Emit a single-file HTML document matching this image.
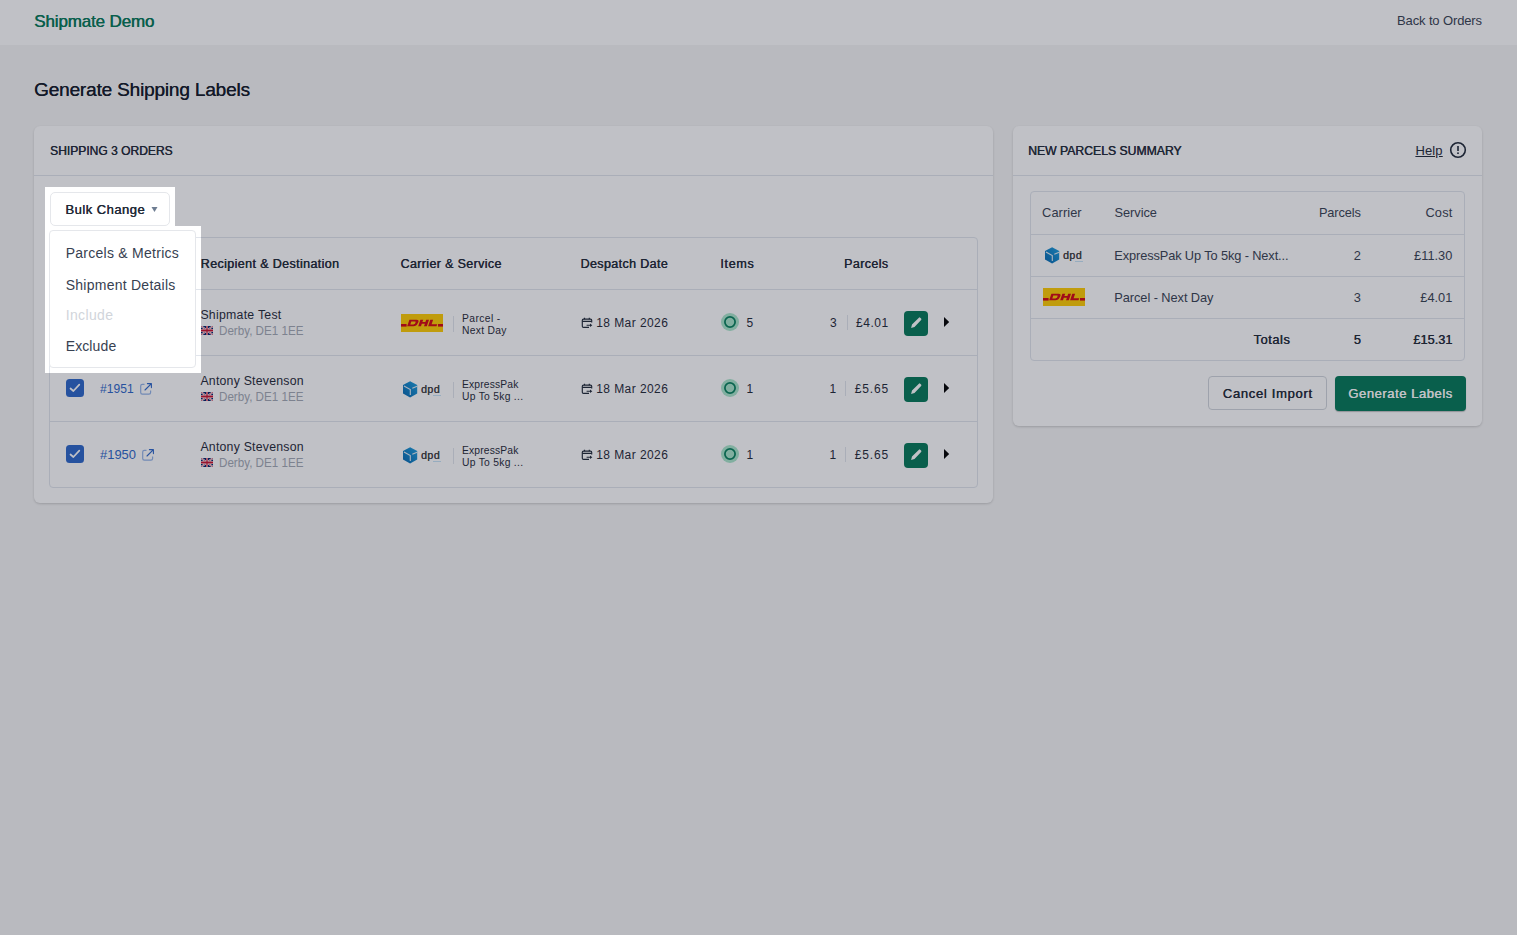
<!DOCTYPE html>
<html><head><meta charset="utf-8">
<style>
*{box-sizing:border-box;margin:0;padding:0}
html,body{width:1517px;height:935px;overflow:hidden}
body{background:#f6f6f6;font-family:"Liberation Sans",sans-serif;color:#1f2937;position:relative}
.a{position:absolute}
.t{position:absolute;white-space:nowrap;line-height:1}
.b{font-weight:bold}
.panel{position:absolute;background:#fff;border-radius:6px;box-shadow:0 1px 3px rgba(0,0,0,.12),0 1px 2px rgba(0,0,0,.06)}
.hl{position:absolute;background:#e1e5ec;height:1px}
.vl{position:absolute;background:#e1e5ec;width:1px}
.ov{position:absolute;background:rgba(24,28,46,.275)}
</style></head><body>

<div class="a" style="left:0;top:0;width:1517px;height:45px;background:#fff"></div>
<div class="t" id="logo" style="left:34.1px;top:12.5px;font-size:17px;color:#047857;text-shadow:0.4px 0 0 currentColor;letter-spacing:-0.141px;">Shipmate Demo</div>
<div class="t" id="back" style="right:35.1px;top:13.5px;font-size:13px;color:#374151;letter-spacing:-0.131px;">Back to Orders</div>
<div class="t" id="title" style="left:34.0px;top:80.0px;font-size:19px;color:#111827;text-shadow:0.3px 0 0 currentColor;letter-spacing:-0.166px;">Generate Shipping Labels</div>
<div class="panel" style="left:34px;top:126px;width:959px;height:377px"></div>
<div class="hl" style="left:34px;top:175px;width:959px"></div>
<div class="t" id="ship" style="left:49.9px;top:144.0px;font-size:13px;color:#1f2937;text-shadow:0.4px 0 0 currentColor;transform:scaleX(0.9266);transform-origin:0 0;">SHIPPING 3 ORDERS</div>
<div class="a" style="left:49px;top:237px;width:929px;height:251px;border:1px solid #e1e5ec;border-radius:4px"></div>
<div class="hl" style="left:49px;top:289px;width:929px"></div>
<div class="hl" style="left:49px;top:355px;width:929px"></div>
<div class="hl" style="left:49px;top:421px;width:929px"></div>
<div class="t" id="h1" style="left:200.6px;top:257.5px;font-size:12.5px;color:#1f2937;text-shadow:0.4px 0 0 currentColor;letter-spacing:0.380px;">Recipient &amp; Destination</div>
<div class="t" id="h2" style="left:400.4px;top:257.5px;font-size:12.5px;color:#1f2937;text-shadow:0.4px 0 0 currentColor;letter-spacing:0.352px;">Carrier &amp; Service</div>
<div class="t" id="h3" style="left:580.4px;top:257.5px;font-size:12.5px;color:#1f2937;text-shadow:0.4px 0 0 currentColor;letter-spacing:0.376px;">Despatch Date</div>
<div class="t" id="h4" style="left:720.2px;top:257.5px;font-size:12.5px;color:#1f2937;text-shadow:0.4px 0 0 currentColor;letter-spacing:0.709px;">Items</div>
<div class="t" id="h5" style="right:628.7px;top:257.5px;font-size:12.5px;color:#1f2937;text-shadow:0.4px 0 0 currentColor;letter-spacing:0.385px;">Parcels</div>
<svg class="a" style="left:66px;top:313px" width="18" height="18" viewBox="0 0 18 18"><rect width="18" height="18" rx="3.5" fill="#2c66c9"/><path d="M4.5 9.5 L7.4 12 L13.3 5.7" stroke="#fff" stroke-width="1.7" fill="none" stroke-linecap="round" stroke-linejoin="round"/></svg>
<div class="t" id="num0" style="left:100.3px;top:316.5px;font-size:12.7px;color:#2c66c9;transform:scaleX(0.9523);transform-origin:0 0;">#1952</div>
<svg class="a" style="left:139px;top:316px" width="14" height="14" viewBox="0 0 14 14"><path d="M5.5 2.3 H3.3 A1.6 1.6 0 0 0 1.7 3.9 V10.6 A1.6 1.6 0 0 0 3.3 12.2 H10 A1.6 1.6 0 0 0 11.6 10.6 V8.4" stroke="#93b4e8" stroke-width="1.2" fill="none"/><path d="M6 8 L12.4 1.6 M8.4 1.6 H12.4 V5.6" stroke="#2c66c9" stroke-width="1.1" fill="none" stroke-linecap="round" stroke-linejoin="round"/></svg>
<div class="t" id="name0" style="left:200.4px;top:308.5px;font-size:12.3px;color:#1f2937;letter-spacing:0.266px;">Shipmate Test</div>
<svg class="a" style="left:201px;top:326px" width="12" height="9" viewBox="0 0 60 30" preserveAspectRatio="none"><rect width="60" height="30" fill="#012169"/><path d="M0,0 L60,30 M60,0 L0,30" stroke="#fff" stroke-width="7"/><path d="M0,0 L60,30 M60,0 L0,30" stroke="#C8102E" stroke-width="2.5"/><path d="M30,0 V30 M0,15 H60" stroke="#fff" stroke-width="10"/><path d="M30,0 V30 M0,15 H60" stroke="#C8102E" stroke-width="6"/></svg>
<div class="t" id="derby0" style="left:218.7px;top:324.5px;font-size:12.3px;color:#a3a9b4;transform:scaleX(0.9450);transform-origin:0 0;">Derby, DE1 1EE</div>
<svg class="a" style="left:401px;top:314px" width="42" height="18" viewBox="0 0 42 18"><rect width="42" height="18" fill="#FFCC00"/><rect x="0" y="10" width="5.6" height="2.6" fill="#D40511"/><rect x="37" y="10" width="5" height="2.6" fill="#D40511"/><g fill="#D40511"><path d="M8.4 5.8 H15.6 C17.6 5.8 18 6.8 17.2 8.4 L16.6 9.6 C15.7 11.4 14.6 12.2 12.4 12.2 H6.2 Z M10.3 7.6 L9.3 10.4 H12.3 C13.3 10.4 13.8 10 14.2 9.2 L14.5 8.6 C14.8 7.9 14.6 7.6 13.8 7.6 Z"/><path d="M19.4 5.8 H22.2 L21.4 8.1 H24.4 L25.2 5.8 H28 L25.8 12.2 H23 L23.9 9.8 H20.8 L20 12.2 H17.2 Z"/><path d="M29.3 5.8 H32.1 L30.6 10.3 H36.2 L35.5 12.2 H27.1 Z"/></g></svg>
<div class="vl" style="left:453px;top:316px;height:16px"></div>
<div class="t" id="s10" style="left:462.0px;top:313.5px;font-size:10.3px;color:#1f2937;letter-spacing:0.402px;">Parcel -</div>
<div class="t" id="s20" style="left:462.0px;top:325.5px;font-size:10.3px;color:#1f2937;letter-spacing:0.306px;">Next Day</div>
<svg class="a" style="left:581px;top:317px" width="12" height="12" viewBox="0 0 12 12"><path d="M10.7 5.6 V3.3 A1.2 1.2 0 0 0 9.5 2.1 H2.5 A1.2 1.2 0 0 0 1.3 3.3 V9.2 A1.2 1.2 0 0 0 2.5 10.4 H8" stroke="#1f2937" stroke-width="1.15" fill="none"/><path d="M1.3 4.4 H10.7 M3.5 0.8 V2.2 M8.3 0.8 V2.2 M5.6 8.2 H9.4" stroke="#1f2937" stroke-width="1.15" fill="none"/><path d="M9 6.5 L11.3 8.2 L9 9.9 Z" fill="#1f2937"/></svg>
<div class="t" id="date0" style="left:596.2px;top:316.5px;font-size:12px;color:#1f2937;letter-spacing:0.431px;">18 Mar 2026</div>
<svg class="a" style="left:721px;top:313px" width="18" height="18" viewBox="0 0 18 18"><circle cx="9" cy="9" r="9" fill="#a9e6cb"/><circle cx="9" cy="9" r="5.1" fill="none" stroke="#06805c" stroke-width="1.75"/></svg>
<div class="t" id="items0" style="left:746.4px;top:317.0px;font-size:12px;color:#1f2937;">5</div>
<div class="t" id="amt0" style="right:628.3px;top:317.0px;font-size:12px;color:#1f2937;letter-spacing:0.542px;">£4.01</div>
<div class="vl" style="left:847px;top:315px;height:15px"></div>
<div class="t" id="cnt0" style="right:680.3px;top:317.0px;font-size:12px;color:#1f2937;">3</div>
<svg class="a" style="left:904px;top:311px" width="24" height="25" viewBox="0 0 24 25"><rect width="24" height="25" rx="4" fill="#047857"/><path d="M7.1 16.9 L8 13.4 L14.9 6.7 A0.9 0.9 0 0 1 16.2 6.7 L17.1 7.6 A0.9 0.9 0 0 1 17.1 8.9 L10.5 16.1 Z" fill="#fff"/></svg>
<svg class="a" style="left:944px;top:317px" width="6" height="10" viewBox="0 0 6 10"><path d="M0 0 L5.2 5 L0 10 Z" fill="#000"/></svg>
<svg class="a" style="left:66px;top:379px" width="18" height="18" viewBox="0 0 18 18"><rect width="18" height="18" rx="3.5" fill="#2c66c9"/><path d="M4.5 9.5 L7.4 12 L13.3 5.7" stroke="#fff" stroke-width="1.7" fill="none" stroke-linecap="round" stroke-linejoin="round"/></svg>
<div class="t" id="num1" style="left:100.3px;top:382.5px;font-size:12.7px;color:#2c66c9;transform:scaleX(0.9523);transform-origin:0 0;">#1951</div>
<svg class="a" style="left:139px;top:382px" width="14" height="14" viewBox="0 0 14 14"><path d="M5.5 2.3 H3.3 A1.6 1.6 0 0 0 1.7 3.9 V10.6 A1.6 1.6 0 0 0 3.3 12.2 H10 A1.6 1.6 0 0 0 11.6 10.6 V8.4" stroke="#93b4e8" stroke-width="1.2" fill="none"/><path d="M6 8 L12.4 1.6 M8.4 1.6 H12.4 V5.6" stroke="#2c66c9" stroke-width="1.1" fill="none" stroke-linecap="round" stroke-linejoin="round"/></svg>
<div class="t" id="name1" style="left:200.4px;top:374.5px;font-size:12.3px;color:#1f2937;letter-spacing:0.226px;">Antony Stevenson</div>
<svg class="a" style="left:201px;top:392px" width="12" height="9" viewBox="0 0 60 30" preserveAspectRatio="none"><rect width="60" height="30" fill="#012169"/><path d="M0,0 L60,30 M60,0 L0,30" stroke="#fff" stroke-width="7"/><path d="M0,0 L60,30 M60,0 L0,30" stroke="#C8102E" stroke-width="2.5"/><path d="M30,0 V30 M0,15 H60" stroke="#fff" stroke-width="10"/><path d="M30,0 V30 M0,15 H60" stroke="#C8102E" stroke-width="6"/></svg>
<div class="t" id="derby1" style="left:218.7px;top:390.5px;font-size:12.3px;color:#a3a9b4;transform:scaleX(0.9450);transform-origin:0 0;">Derby, DE1 1EE</div>
<svg class="a" style="left:403px;top:381px" width="15" height="17" viewBox="0 0 15 17"><defs><linearGradient id="g403381" x1="0" y1="1" x2="1" y2="0"><stop offset="0" stop-color="#0567b0"/><stop offset="1" stop-color="#1aa0e0"/></linearGradient></defs><path d="M7.1 0.2 L14.2 3.9 L14.2 12.6 L7.1 16.4 L0 12.6 L0 3.9 Z" fill="url(#g403381)"/><path d="M1 5 L7.3 8.6 L7.3 13.9" stroke="#e6eef3" stroke-width="1.1" fill="none"/><path d="M9.3 7.2 L14.1 5.3" stroke="#e6eef3" stroke-width="1.1" fill="none"/></svg><div class="t" style="left:421px;top:384px;font-size:10.6px;color:#414042;letter-spacing:0.45px;text-shadow:0.25px 0 0 #414042">dpd</div><div class="a" style="left:433px;top:394.5px;width:8px;height:1.4px;background:#6fb8e6;opacity:.4"></div>
<div class="vl" style="left:453px;top:382px;height:16px"></div>
<div class="t" id="s11" style="left:462.0px;top:379.5px;font-size:10.3px;color:#1f2937;letter-spacing:0.150px;">ExpressPak</div>
<div class="t" id="s21" style="left:462.0px;top:391.5px;font-size:10.3px;color:#1f2937;letter-spacing:0.281px;">Up To 5kg ...</div>
<svg class="a" style="left:581px;top:383px" width="12" height="12" viewBox="0 0 12 12"><path d="M10.7 5.6 V3.3 A1.2 1.2 0 0 0 9.5 2.1 H2.5 A1.2 1.2 0 0 0 1.3 3.3 V9.2 A1.2 1.2 0 0 0 2.5 10.4 H8" stroke="#1f2937" stroke-width="1.15" fill="none"/><path d="M1.3 4.4 H10.7 M3.5 0.8 V2.2 M8.3 0.8 V2.2 M5.6 8.2 H9.4" stroke="#1f2937" stroke-width="1.15" fill="none"/><path d="M9 6.5 L11.3 8.2 L9 9.9 Z" fill="#1f2937"/></svg>
<div class="t" id="date1" style="left:596.2px;top:382.5px;font-size:12px;color:#1f2937;letter-spacing:0.431px;">18 Mar 2026</div>
<svg class="a" style="left:721px;top:379px" width="18" height="18" viewBox="0 0 18 18"><circle cx="9" cy="9" r="9" fill="#a9e6cb"/><circle cx="9" cy="9" r="5.1" fill="none" stroke="#06805c" stroke-width="1.75"/></svg>
<div class="t" id="items1" style="left:746.4px;top:383.0px;font-size:12px;color:#1f2937;">1</div>
<div class="t" id="amt1" style="right:627.9px;top:383.0px;font-size:12px;color:#1f2937;letter-spacing:0.867px;">£5.65</div>
<div class="vl" style="left:845px;top:381px;height:15px"></div>
<div class="t" id="cnt1" style="right:680.9px;top:383.0px;font-size:12px;color:#1f2937;">1</div>
<svg class="a" style="left:904px;top:377px" width="24" height="25" viewBox="0 0 24 25"><rect width="24" height="25" rx="4" fill="#047857"/><path d="M7.1 16.9 L8 13.4 L14.9 6.7 A0.9 0.9 0 0 1 16.2 6.7 L17.1 7.6 A0.9 0.9 0 0 1 17.1 8.9 L10.5 16.1 Z" fill="#fff"/></svg>
<svg class="a" style="left:944px;top:383px" width="6" height="10" viewBox="0 0 6 10"><path d="M0 0 L5.2 5 L0 10 Z" fill="#000"/></svg>
<svg class="a" style="left:66px;top:445px" width="18" height="18" viewBox="0 0 18 18"><rect width="18" height="18" rx="3.5" fill="#2c66c9"/><path d="M4.5 9.5 L7.4 12 L13.3 5.7" stroke="#fff" stroke-width="1.7" fill="none" stroke-linecap="round" stroke-linejoin="round"/></svg>
<div class="t" id="num2" style="left:100.3px;top:448.5px;font-size:12.7px;color:#2c66c9;transform:scaleX(1.0204);transform-origin:0 0;">#1950</div>
<svg class="a" style="left:141px;top:448px" width="14" height="14" viewBox="0 0 14 14"><path d="M5.5 2.3 H3.3 A1.6 1.6 0 0 0 1.7 3.9 V10.6 A1.6 1.6 0 0 0 3.3 12.2 H10 A1.6 1.6 0 0 0 11.6 10.6 V8.4" stroke="#93b4e8" stroke-width="1.2" fill="none"/><path d="M6 8 L12.4 1.6 M8.4 1.6 H12.4 V5.6" stroke="#2c66c9" stroke-width="1.1" fill="none" stroke-linecap="round" stroke-linejoin="round"/></svg>
<div class="t" id="name2" style="left:200.4px;top:440.5px;font-size:12.3px;color:#1f2937;letter-spacing:0.226px;">Antony Stevenson</div>
<svg class="a" style="left:201px;top:458px" width="12" height="9" viewBox="0 0 60 30" preserveAspectRatio="none"><rect width="60" height="30" fill="#012169"/><path d="M0,0 L60,30 M60,0 L0,30" stroke="#fff" stroke-width="7"/><path d="M0,0 L60,30 M60,0 L0,30" stroke="#C8102E" stroke-width="2.5"/><path d="M30,0 V30 M0,15 H60" stroke="#fff" stroke-width="10"/><path d="M30,0 V30 M0,15 H60" stroke="#C8102E" stroke-width="6"/></svg>
<div class="t" id="derby2" style="left:218.7px;top:456.5px;font-size:12.3px;color:#a3a9b4;transform:scaleX(0.9450);transform-origin:0 0;">Derby, DE1 1EE</div>
<svg class="a" style="left:403px;top:447px" width="15" height="17" viewBox="0 0 15 17"><defs><linearGradient id="g403447" x1="0" y1="1" x2="1" y2="0"><stop offset="0" stop-color="#0567b0"/><stop offset="1" stop-color="#1aa0e0"/></linearGradient></defs><path d="M7.1 0.2 L14.2 3.9 L14.2 12.6 L7.1 16.4 L0 12.6 L0 3.9 Z" fill="url(#g403447)"/><path d="M1 5 L7.3 8.6 L7.3 13.9" stroke="#e6eef3" stroke-width="1.1" fill="none"/><path d="M9.3 7.2 L14.1 5.3" stroke="#e6eef3" stroke-width="1.1" fill="none"/></svg><div class="t" style="left:421px;top:450px;font-size:10.6px;color:#414042;letter-spacing:0.45px;text-shadow:0.25px 0 0 #414042">dpd</div><div class="a" style="left:433px;top:460.5px;width:8px;height:1.4px;background:#6fb8e6;opacity:.4"></div>
<div class="vl" style="left:453px;top:448px;height:16px"></div>
<div class="t" id="s12" style="left:462.0px;top:445.5px;font-size:10.3px;color:#1f2937;letter-spacing:0.150px;">ExpressPak</div>
<div class="t" id="s22" style="left:462.0px;top:457.5px;font-size:10.3px;color:#1f2937;letter-spacing:0.281px;">Up To 5kg ...</div>
<svg class="a" style="left:581px;top:449px" width="12" height="12" viewBox="0 0 12 12"><path d="M10.7 5.6 V3.3 A1.2 1.2 0 0 0 9.5 2.1 H2.5 A1.2 1.2 0 0 0 1.3 3.3 V9.2 A1.2 1.2 0 0 0 2.5 10.4 H8" stroke="#1f2937" stroke-width="1.15" fill="none"/><path d="M1.3 4.4 H10.7 M3.5 0.8 V2.2 M8.3 0.8 V2.2 M5.6 8.2 H9.4" stroke="#1f2937" stroke-width="1.15" fill="none"/><path d="M9 6.5 L11.3 8.2 L9 9.9 Z" fill="#1f2937"/></svg>
<div class="t" id="date2" style="left:596.2px;top:448.5px;font-size:12px;color:#1f2937;letter-spacing:0.431px;">18 Mar 2026</div>
<svg class="a" style="left:721px;top:445px" width="18" height="18" viewBox="0 0 18 18"><circle cx="9" cy="9" r="9" fill="#a9e6cb"/><circle cx="9" cy="9" r="5.1" fill="none" stroke="#06805c" stroke-width="1.75"/></svg>
<div class="t" id="items2" style="left:746.4px;top:449.0px;font-size:12px;color:#1f2937;">1</div>
<div class="t" id="amt2" style="right:627.9px;top:449.0px;font-size:12px;color:#1f2937;letter-spacing:0.867px;">£5.65</div>
<div class="vl" style="left:845px;top:447px;height:15px"></div>
<div class="t" id="cnt2" style="right:680.9px;top:449.0px;font-size:12px;color:#1f2937;">1</div>
<svg class="a" style="left:904px;top:443px" width="24" height="25" viewBox="0 0 24 25"><rect width="24" height="25" rx="4" fill="#047857"/><path d="M7.1 16.9 L8 13.4 L14.9 6.7 A0.9 0.9 0 0 1 16.2 6.7 L17.1 7.6 A0.9 0.9 0 0 1 17.1 8.9 L10.5 16.1 Z" fill="#fff"/></svg>
<svg class="a" style="left:944px;top:449px" width="6" height="10" viewBox="0 0 6 10"><path d="M0 0 L5.2 5 L0 10 Z" fill="#000"/></svg>
<div class="panel" style="left:1013px;top:126px;width:469px;height:300px"></div>
<div class="hl" style="left:1013px;top:175px;width:469px"></div>
<div class="t" id="nps" style="left:1028.1px;top:144.0px;font-size:13px;color:#1f2937;text-shadow:0.4px 0 0 currentColor;transform:scaleX(0.9388);transform-origin:0 0;">NEW PARCELS SUMMARY</div>
<div class="t" id="help" style="left:1415.4px;top:144.0px;font-size:13px;color:#1f2937;letter-spacing:0.150px;text-decoration:underline;">Help</div>
<svg class="a" style="left:1449px;top:141px" width="18" height="18" viewBox="0 0 18 18"><circle cx="9" cy="9" r="7.3" fill="none" stroke="#1f2937" stroke-width="1.6"/><rect x="8.2" y="5" width="1.6" height="5" fill="#1f2937"/><rect x="8.2" y="11.4" width="1.6" height="1.6" fill="#1f2937"/></svg>
<div class="a" style="left:1030px;top:191px;width:435px;height:170px;border:1px solid #e1e5ec;border-radius:4px"></div>
<div class="hl" style="left:1030px;top:234px;width:435px"></div>
<div class="hl" style="left:1030px;top:276px;width:435px"></div>
<div class="hl" style="left:1030px;top:318px;width:435px"></div>
<div class="t" id="rc" style="left:1042.1px;top:207.0px;font-size:12.8px;color:#374151;letter-spacing:0.065px;">Carrier</div>
<div class="t" id="rs" style="left:1114.4px;top:207.0px;font-size:12.8px;color:#374151;letter-spacing:-0.012px;">Service</div>
<div class="t" id="rp" style="right:156.3px;top:207.0px;font-size:12.8px;color:#374151;letter-spacing:-0.129px;">Parcels</div>
<div class="t" id="rco" style="right:64.5px;top:207.0px;font-size:12.8px;color:#374151;letter-spacing:0.196px;">Cost</div>
<div class="t" id="r1s" style="left:1114.3px;top:250.0px;font-size:12.8px;color:#374151;letter-spacing:-0.116px;">ExpressPak Up To 5kg - Next...</div>
<div class="t" id="r1p" style="right:156.2px;top:250.0px;font-size:12.8px;color:#374151;">2</div>
<div class="t" id="r1c" style="right:64.7px;top:250.0px;font-size:12.8px;color:#374151;">£11.30</div>
<div class="t" id="r2s" style="left:1114.3px;top:292.0px;font-size:12.8px;color:#374151;letter-spacing:-0.068px;">Parcel - Next Day</div>
<div class="t" id="r2p" style="right:156.2px;top:292.0px;font-size:12.8px;color:#374151;">3</div>
<div class="t" id="r2c" style="right:64.7px;top:292.0px;font-size:12.8px;color:#374151;">£4.01</div>
<div class="t" id="r3t" style="right:226.8px;top:334.0px;font-size:12.8px;color:#1f2937;text-shadow:0.4px 0 0 currentColor;letter-spacing:0.553px;">Totals</div>
<div class="t" id="r3p" style="right:156.2px;top:334.0px;font-size:12.8px;color:#1f2937;text-shadow:0.4px 0 0 currentColor;">5</div>
<div class="t" id="r3c" style="right:64.7px;top:334.0px;font-size:12.8px;color:#1f2937;text-shadow:0.4px 0 0 currentColor;">£15.31</div>
<svg class="a" style="left:1045px;top:247px" width="15" height="17" viewBox="0 0 15 17"><defs><linearGradient id="g1045247" x1="0" y1="1" x2="1" y2="0"><stop offset="0" stop-color="#0567b0"/><stop offset="1" stop-color="#1aa0e0"/></linearGradient></defs><path d="M7.1 0.2 L14.2 3.9 L14.2 12.6 L7.1 16.4 L0 12.6 L0 3.9 Z" fill="url(#g1045247)"/><path d="M1 5 L7.3 8.6 L7.3 13.9" stroke="#e6eef3" stroke-width="1.1" fill="none"/><path d="M9.3 7.2 L14.1 5.3" stroke="#e6eef3" stroke-width="1.1" fill="none"/></svg><div class="t" style="left:1063px;top:250px;font-size:10.6px;color:#414042;letter-spacing:0.45px;text-shadow:0.25px 0 0 #414042">dpd</div><div class="a" style="left:1075px;top:260.5px;width:8px;height:1.4px;background:#6fb8e6;opacity:.4"></div>
<svg class="a" style="left:1043px;top:288px" width="42" height="18" viewBox="0 0 42 18"><rect width="42" height="18" fill="#FFCC00"/><rect x="0" y="10" width="5.6" height="2.6" fill="#D40511"/><rect x="37" y="10" width="5" height="2.6" fill="#D40511"/><g fill="#D40511"><path d="M8.4 5.8 H15.6 C17.6 5.8 18 6.8 17.2 8.4 L16.6 9.6 C15.7 11.4 14.6 12.2 12.4 12.2 H6.2 Z M10.3 7.6 L9.3 10.4 H12.3 C13.3 10.4 13.8 10 14.2 9.2 L14.5 8.6 C14.8 7.9 14.6 7.6 13.8 7.6 Z"/><path d="M19.4 5.8 H22.2 L21.4 8.1 H24.4 L25.2 5.8 H28 L25.8 12.2 H23 L23.9 9.8 H20.8 L20 12.2 H17.2 Z"/><path d="M29.3 5.8 H32.1 L30.6 10.3 H36.2 L35.5 12.2 H27.1 Z"/></g></svg>
<div class="a" style="left:1208px;top:376px;width:119px;height:34px;border:1px solid #d1d5db;border-radius:4px;background:#fff"></div>
<div class="t" id="cancel" style="left:1222.7px;top:387.0px;font-size:13px;color:#1f2937;text-shadow:0.4px 0 0 currentColor;letter-spacing:0.690px;">Cancel Import</div>
<div class="a" style="left:1335px;top:376px;width:131px;height:35px;border-radius:4px;background:#047857;box-shadow:0 1px 1px rgba(0,0,0,.25)"></div>
<div class="t" id="gen" style="left:1348.2px;top:387.0px;font-size:13px;color:#ffffff;text-shadow:0.4px 0 0 currentColor;letter-spacing:0.555px;">Generate Labels</div>
<div class="ov" style="left:0;top:0;width:1517px;height:187px"></div>
<div class="ov" style="left:0;top:187px;width:45px;height:186px"></div>
<div class="ov" style="left:175px;top:187px;width:1342px;height:39px"></div>
<div class="ov" style="left:201px;top:226px;width:1316px;height:147px"></div>
<div class="ov" style="left:0;top:373px;width:1517px;height:562px"></div>
<div class="a" style="left:50px;top:192px;width:120px;height:34px;border:1px solid #e5e7eb;border-radius:5px;background:#fff"></div>
<div class="t" id="bulk" style="left:65.3px;top:203.0px;font-size:13px;color:#1f2937;text-shadow:0.4px 0 0 currentColor;letter-spacing:0.475px;">Bulk Change</div>
<svg class="a" style="left:151px;top:206px" width="7" height="7" viewBox="0 0 7 7"><path d="M0.5 1 L6.5 1 L3.5 6 Z" fill="#6e7d92"/></svg>
<div class="a" style="left:49px;top:230px;width:147px;height:138px;border:1px solid #e5e7eb;border-radius:4px;background:#fff"></div>
<div class="t" id="dd1" style="left:65.7px;top:246.0px;font-size:14px;color:#374151;letter-spacing:0.261px;">Parcels &amp; Metrics</div>
<div class="t" id="dd2" style="left:65.7px;top:277.5px;font-size:14px;color:#374151;letter-spacing:0.251px;">Shipment Details</div>
<div class="t" id="dd3" style="left:65.7px;top:308.0px;font-size:14px;color:#d1d5db;letter-spacing:0.357px;">Include</div>
<div class="t" id="dd4" style="left:65.7px;top:339.0px;font-size:14px;color:#374151;letter-spacing:0.115px;">Exclude</div>
</body></html>
